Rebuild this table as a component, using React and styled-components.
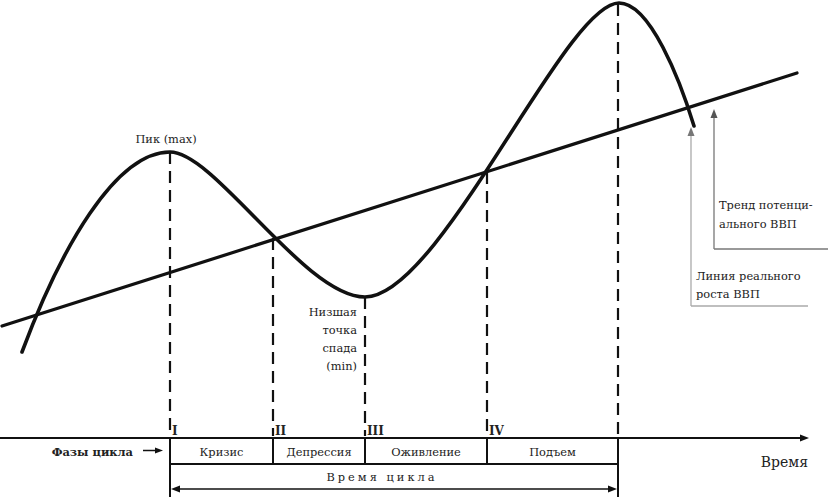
import styled, { createGlobalStyle } from 'styled-components';

// DejaVu Serif keeps its serif shapes at small sizes here; sized down to match Times widths
const SERIF = '"DejaVu Serif", "Liberation Serif", serif';

const GlobalStyle = createGlobalStyle`
  html, body {
    margin: 0;
    padding: 0;
    background: #fff;
  }
`;

const Page = styled.div`
  width: 828px;
  height: 501px;
  background: #fff;
  overflow: hidden;
`;

const Chart = styled.svg`
  display: block;
  width: 828px;
  height: 501px;
`;

const Label = styled.text`
  font-family: ${SERIF};
  font-size: ${(p) => p.$size || 11.4}px;
  font-weight: ${(p) => (p.$bold ? 700 : 400)};
  letter-spacing: ${(p) => p.$spacing || 0}px;
  fill: #222;
`;

const Curve = styled.path`
  fill: none;
  stroke: #111;
  stroke-width: ${(p) => p.$w || 3}px;
  stroke-linecap: round;
`;

const Dashed = styled.line`
  stroke: #111;
  stroke-width: 2.2px;
  stroke-dasharray: 12 7;
`;

const Solid = styled.line`
  stroke: ${(p) => p.$color || '#111'};
  stroke-width: ${(p) => p.$w || 2}px;
`;

const Head = styled.polygon`
  fill: ${(p) => p.$color || '#111'};
`;

// x-positions of the phase boundaries
const marks = [
  { x: 170, top: 152, numeral: 'I' },
  { x: 273, top: 238, numeral: 'II' },
  { x: 365, top: 297, numeral: 'III' },
  { x: 487, top: 172, numeral: 'IV' },
  { x: 618, top: 4, numeral: '' },
];

const phases = [
  { from: 170, to: 273, name: 'Кризис' },
  { from: 273, to: 365, name: 'Депрессия' },
  { from: 365, to: 487, name: 'Оживление' },
  { from: 487, to: 618, name: 'Подъем' },
];

const AXIS_Y = 438;
const BOX_Y = 464;
const CYCLE_Y = 489;

const App = () => {
  return (
    <Page>
      <GlobalStyle />
      <Chart viewBox="0 0 828 501">
        {/* dashed guides */}
        {marks.map((m) => (
          <Dashed key={m.x} x1={m.x} y1={m.top} x2={m.x} y2={AXIS_Y - 2} />
        ))}

        {/* trend of potential GDP */}
        <Curve $w={3.2} d="M2,326 L797,73" />

        {/* real GDP */}
        <Curve
          $w={3.6}
          d="M22,352 C60,250 115,152 170,152 C215,152 305,297 365,297 C440,297 565,3 619,3 C650,3 680,80 694,126"
        />

        <Label x={166} y={143} textAnchor="middle">Пик (max)</Label>

        <Label x={357} y={316} textAnchor="end">Низшая</Label>
        <Label x={357} y={334} textAnchor="end">точка</Label>
        <Label x={357} y={352} textAnchor="end">спада</Label>
        <Label x={357} y={370} textAnchor="end">(min)</Label>

        {/* callouts on the right */}
        <Solid $color="#777" $w={1.3} x1={714} y1={116} x2={714} y2={249} />
        <Solid $color="#777" $w={1.3} x1={714} y1={249} x2={828} y2={249} />
        <Head $color="#555" points="714,109 710.5,118 717.5,118" />
        <Label x={719} y={209}>Тренд потенци-</Label>
        <Label x={719} y={228}>ального ВВП</Label>

        <Solid $color="#aaa" $w={1.3} x1={691} y1={134} x2={691} y2={306} />
        <Solid $color="#aaa" $w={1.3} x1={691} y1={306} x2={808} y2={306} />
        <Head $color="#777" points="691,127 687.5,136 694.5,136" />
        <Label x={696} y={280}>Линия реального</Label>
        <Label x={696} y={298}>роста ВВП</Label>

        {/* time axis */}
        <Solid x1={0} y1={AXIS_Y} x2={802} y2={AXIS_Y} />
        <Head points="809,438 800,434.5 800,441.5" />
        <Label x={808} y={467} textAnchor="end" $size={14}>Время</Label>

        {/* phase table */}
        {marks.map((m) => (
          <Solid key={`s${m.x}`} x1={m.x} y1={AXIS_Y} x2={m.x} y2={BOX_Y} />
        ))}
        <Solid x1={170} y1={BOX_Y} x2={618} y2={BOX_Y} />
        <Solid x1={170} y1={BOX_Y} x2={170} y2={497} />
        <Solid x1={618} y1={BOX_Y} x2={618} y2={497} />
        {marks.map((m) =>
          m.numeral ? (
            <Label key={`n${m.x}`} x={m.x + 2} y={435} $size={12} $bold>
              {m.numeral}
            </Label>
          ) : null
        )}
        {phases.map((p) => (
          <Label key={p.name} x={(p.from + p.to) / 2} y={456} textAnchor="middle">
            {p.name}
          </Label>
        ))}

        <Label x={133} y={456} textAnchor="end" $bold>Фазы цикла</Label>
        <Solid $w={1.5} x1={143} y1={450.5} x2={156} y2={450.5} />
        <Head points="163,450.5 155,447.5 155,453.5" />

        {/* cycle length */}
        <Label x={382} y={481} textAnchor="middle" $spacing={3}>Время цикла</Label>
        <Solid $w={1.5} x1={176} y1={CYCLE_Y} x2={612} y2={CYCLE_Y} />
        <Head points="171,489 180,485.5 180,492.5" />
        <Head points="617,489 608,485.5 608,492.5" />
      </Chart>
    </Page>
  );
};

export default App;
